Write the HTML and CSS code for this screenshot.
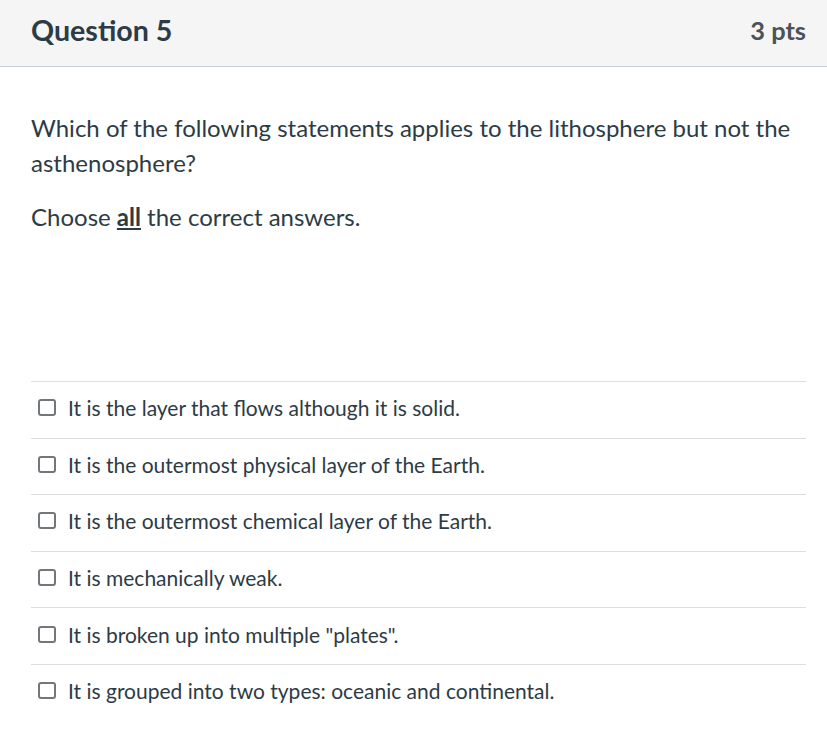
FILE: index.html
```html
<!DOCTYPE html>
<html lang="en">
<head>
<meta charset="UTF-8">
<meta name="viewport" content="width=device-width, initial-scale=1.0">
<title>Question 5</title>
<link rel="stylesheet" href="styles.css">
</head>
<body>
    <div class="question">
        <div class="header">
            <h2 class="title">Question 5</h2>
            <div class="points">3 pts</div>
        </div>
        <div class="content">
            <div class="text">
                <p>Which of the following statements applies to the lithosphere but not the asthenosphere?</p>
                <p>Choose <strong><u>all</u></strong> the correct answers.</p>
            </div>
            <div class="answers">
                <label class="answer"><input type="checkbox"><span>It is the layer that flows although it is solid.</span></label>
                <label class="answer"><input type="checkbox"><span>It is the outermost physical layer of the Earth.</span></label>
                <label class="answer"><input type="checkbox"><span>It is the outermost chemical layer of the Earth.</span></label>
                <label class="answer"><input type="checkbox"><span>It is mechanically weak.</span></label>
                <label class="answer"><input type="checkbox"><span>It is broken up into multiple "plates".</span></label>
                <label class="answer"><input type="checkbox"><span>It is grouped into two types: oceanic and continental.</span></label>
            </div>
        </div>
    </div>
</body>
</html>
```
FILE: styles.css
```css
body {
    margin: 0;
    font-family: Lato, "Open Sans", sans-serif;
    color: #2d3b45;
    background: #fff;
}
.header {
    display: flex;
    justify-content: space-between;
    align-items: center;
    padding: 0 21px 6px 31px;
    box-sizing: border-box;
    height: 67px;
    background: #f5f5f5;
    border-bottom: 1px solid #c7cdd1;
}
.title {
    margin: 0;
    font-size: 28.6px;
    font-weight: bold;
}
.points {
    font-size: 25.4px;
    font-weight: bold;
    color: #4b5258;
}
.content {
    padding: 0 21px 0 31px;
}
.text {
    height: 314px;
    padding-top: 43px;
    box-sizing: border-box;
}
.text p {
    margin: 0 0 19px;
    font-size: 24px;
    line-height: 35px;
}
.answer {
    display: flex;
    align-items: center;
    box-sizing: border-box;
    height: 56.6px;
    padding-bottom: 4px;
    border-top: 1px solid #dcdfe2;
    font-size: 21px;
}
.answer input {
    appearance: none;
    width: 18px;
    height: 17px;
    margin: 0 12px 0 7px;
    border: 2px solid #73777b;
    border-radius: 3px;
    background: #fff;
}
```
